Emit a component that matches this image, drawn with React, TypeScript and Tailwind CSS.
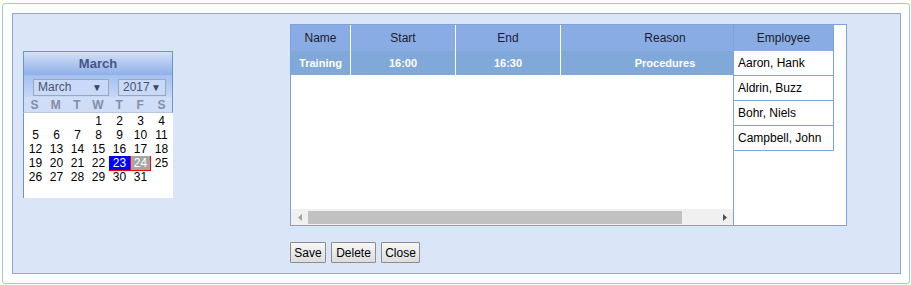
import React from 'react';

const weeks: (number | null)[][] = [
  [null, null, null, 1, 2, 3, 4],
  [5, 6, 7, 8, 9, 10, 11],
  [12, 13, 14, 15, 16, 17, 18],
  [19, 20, 21, 22, 23, 24, 25],
  [26, 27, 28, 29, 30, 31, null],
  [null, null, null, null, null, null, null],
];

const employees = ['Aaron, Hank', 'Aldrin, Buzz', 'Bohr, Niels', 'Campbell, John'];

const dayCell = (d: number | null) => {
  if (d === 23) return 'bg-[#0000ff] text-white border-b border-[#ff0000]';
  if (d === 24) return 'bg-[#a6a6a6] text-white border-x border-b border-[#ff0000]';
  return 'text-black';
};

const Calendar: React.FC = () => (
  <div className="w-[150px] h-[147px] flex flex-col">
    {/* title */}
    <div className="h-[25px] border-t border-x border-[#6d95cc] bg-gradient-to-b from-[#d3e0f7] to-[#8eb0e8] flex items-center justify-center text-[13px] font-bold text-[#4a5584]">
      March
    </div>
    {/* month / year pickers */}
    <div className="h-[23px] border-x border-[#6d95cc] bg-gradient-to-b from-[#a2c0f0] to-[#c6d7f6] flex items-center pl-[9px] pt-[3px]">
      <div className="w-[76px] h-[17px] border border-[#9aa6bb] bg-[#c9daf8] flex items-center justify-between pl-[4px] pr-[6px] text-[12px] text-[#4b5272]">
        <span>March</span>
        <span className="text-[10px] text-[#3d4560]">▼</span>
      </div>
      <div className="ml-[9px] w-[48px] h-[17px] border border-[#9aa6bb] bg-[#c9daf8] flex items-center justify-between pl-[4px] pr-[4px] text-[12px] text-[#4b5272]">
        <span>2017</span>
        <span className="text-[10px] text-[#3d4560]">▼</span>
      </div>
    </div>
    <div className="h-[16px] border-x border-b border-[#6d95cc] border-b-[#b8c7e0] bg-[#cfddf6] grid grid-cols-7 text-[12px] font-bold text-[#858ca6] leading-[16px]">
      {['S', 'M', 'T', 'W', 'T', 'F', 'S'].map((d, i) => (
        <div key={i} className="text-center">{d}</div>
      ))}
    </div>
    <div className="flex-1 bg-white border-l border-[#6d95cc] pt-[1px] pl-[1px] pr-[1px]">
      {weeks.map((w, i) => (
        <div key={i} className="grid grid-cols-7 h-[14px] text-[12px] leading-[14px]">
          {w.map((d, j) => (
            <div key={j} className={`text-center ${dayCell(d)}`}>{d ?? ''}</div>
          ))}
        </div>
      ))}
    </div>
  </div>
);

const btn = 'h-[21px] border border-[#8c8c8c] bg-gradient-to-b from-[#f7f7f7] to-[#dddddd] text-[12px] text-black leading-none rounded-[1px] flex items-center justify-center';

export default function App() {
  return (
    <div className="w-[911px] h-[285px] bg-white pt-[3px] pl-[2px]" style={{ fontFamily: '"Liberation Sans", Arial, sans-serif' }}>
      <div className="w-[908px] h-[281px] border border-[#a9c2ea] rounded-[3px] p-[9px] bg-white">
        <div className="w-[889px] h-[261px] border border-[#88aadd] bg-[#dae5f8] flex pl-[10px] pt-[10px]">
          <div className="mt-[27px]">
            <Calendar />
          </div>

          <div className="ml-[117px] flex flex-col">
            {/* grid */}
            <div className="w-[557px] h-[202px] border border-[#7ba2dc] bg-white flex">
              <div className="w-[443px] border-r border-[#7ba2dc] flex flex-col overflow-hidden">
                <div className="flex h-[26px] bg-[#8aace4] text-[12px] text-[#1c1c2c] shrink-0">
                  <div className="w-[60px] shrink-0 border-r border-white flex items-center justify-center">Name</div>
                  <div className="w-[105px] shrink-0 border-r border-white flex items-center justify-center">Start</div>
                  <div className="w-[105px] shrink-0 border-r border-white flex items-center justify-center">End</div>
                  <div className="w-[208px] shrink-0 flex items-center justify-center">Reason</div>
                </div>
                <div className="flex h-[24px] bg-[#80a8d9] text-[11px] font-bold text-white shrink-0">
                  <div className="w-[60px] shrink-0 border-r border-white flex items-center justify-center">Training</div>
                  <div className="w-[105px] shrink-0 border-r border-white flex items-center justify-center">16:00</div>
                  <div className="w-[105px] shrink-0 border-r border-white flex items-center justify-center">16:30</div>
                  <div className="w-[208px] shrink-0 flex items-center justify-center">Procedures</div>
                </div>
                <div className="flex-1" />
                {/* horizontal scrollbar */}
                <div className="h-[16px] bg-[#f0f0f0] flex items-center shrink-0">
                  <div className="w-[17px] flex items-center justify-center">
                    <svg width="4" height="7" viewBox="0 0 4 7"><path d="M4 0 L0 3.5 L4 7 Z" fill="#a3a3a3" /></svg>
                  </div>
                  <div className="w-[374px] h-[13px] bg-[#c1c1c1]" />
                  <div className="flex-1 flex items-center justify-end pr-[6px]">
                    <svg width="4" height="7" viewBox="0 0 4 7"><path d="M0 0 L4 3.5 L0 7 Z" fill="#505050" /></svg>
                  </div>
                </div>
              </div>

              <div className="w-[100px] self-start border-r border-[#7ba2dc]">
                <div className="h-[26px] bg-[#8aace4] text-[12px] text-[#1c1c2c] flex items-center justify-center">Employee</div>
                {employees.map((e) => (
                  <div key={e} className="h-[25px] border-b border-[#7ba2dc] flex items-center pl-[4px] text-[12px] text-black">
                    {e}
                  </div>
                ))}
              </div>
            </div>

            {/* buttons */}
            <div className="flex gap-[5px] mt-[16px]">
              <button className={`${btn} w-[36px]`}>Save</button>
              <button className={`${btn} w-[45px]`}>Delete</button>
              <button className={`${btn} w-[39px]`}>Close</button>
            </div>
          </div>
        </div>
      </div>
    </div>
  );
}
